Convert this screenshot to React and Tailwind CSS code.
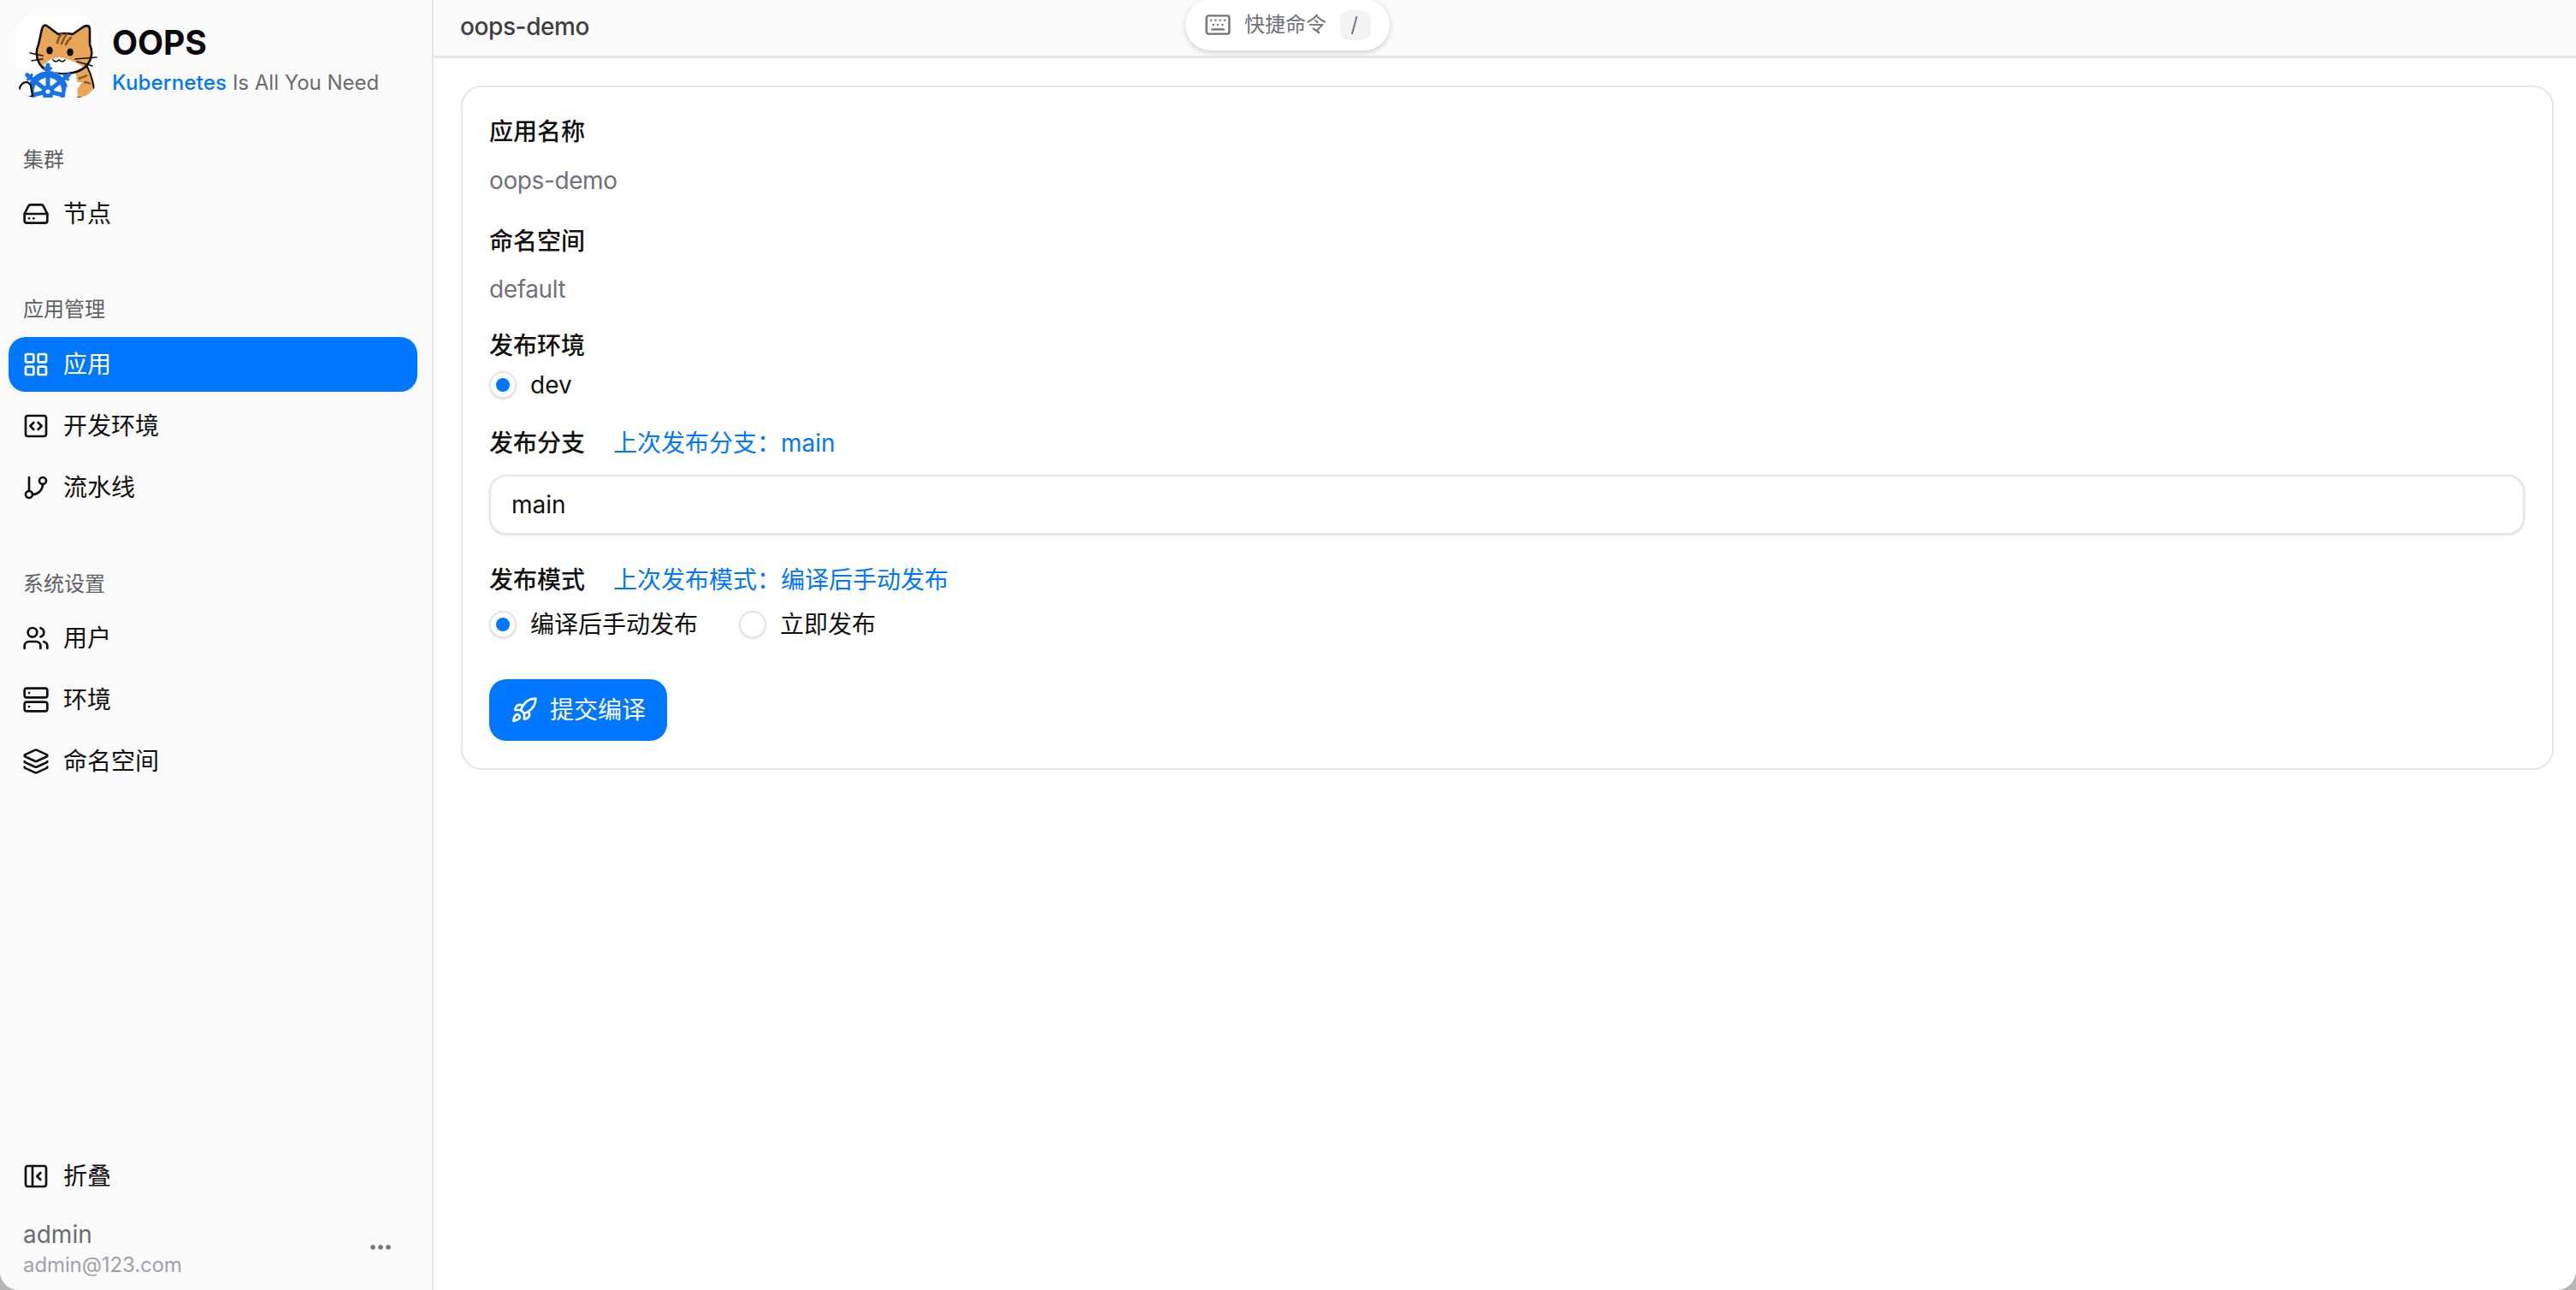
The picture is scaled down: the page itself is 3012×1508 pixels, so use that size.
import React from "react";
import { HardDrive, LayoutGrid, SquareCode, GitBranch, Users, Server, Layers, PanelLeftClose, Rocket, Keyboard } from "lucide-react";

const SANS = "font-['Inter','Noto_Sans_CJK_SC',sans-serif]";

function CatLogo() {
  const spokes = [0, 51.4, 102.8, 154.2, 205.6, 257, 308.4];
  return (
    <svg width="96" height="96" viewBox="0 0 96 96" className="block">
      <defs>
        <clipPath id="logoClip"><rect width="96" height="96" rx="24" /></clipPath>
      </defs>
      <g clipPath="url(#logoClip)">
        <rect width="96" height="96" fill="#ffffff" />
        <path d="M56 62 L84 60 Q92 76 93 96 L52 96 Z" fill="#E9A558" stroke="#111" strokeWidth="2" />
        <path d="M36 62 L70 62 L72 78 L78 78 L66 96 L30 96 Z" fill="#fff" />
        <path d="M74 74 Q80 72 84 70 M80 78 Q84 78 88 80" stroke="#8a5a2b" strokeWidth="2.5" fill="none" />
        <path d="M27 34 L31 16 Q33 9 38 13 L50 22 Q58 20 67 22 L80 13 Q87 10 87 17 L87 34 Q92 45 86 55 Q78 68 56 68 Q34 68 28 56 Q22 45 27 34 Z" fill="#E9A558" stroke="#111" strokeWidth="2.6" strokeLinejoin="round" />
        <path d="M33 58 Q40 50 51 49 Q63 50 79 60 Q70 67 55 67 Q40 67 33 58 Z" fill="#ffffff" />
        <path d="M49 32 Q50 26 54 22 M54 33 Q56 27 60 22 M59 34 Q61 29 65 26" stroke="#8a5a2b" strokeWidth="2.8" fill="none" strokeLinecap="round" />
        <ellipse cx="40" cy="41" rx="3.8" ry="4.6" fill="#111" />
        <ellipse cx="64" cy="43" rx="3.8" ry="4.6" fill="#111" />
        <path d="M48 45.5 Q51 44.5 54 45.5 L51 49 Z" fill="#F0A078" />
        <path d="M44 52 Q47 56 51 52 Q55 56 58 52" stroke="#111" strokeWidth="1.6" fill="none" strokeLinecap="round" />
        <path d="M17 44 L32 47 M19 53 L32 51 M70 51 L95 49 M72 54 L90 59" stroke="#111" strokeWidth="1.5" fill="none" strokeLinecap="round" />
        <g transform="translate(38 89)">
          <circle r="24" fill="#fff" />
          {spokes.map((a) => (
            <g key={a} transform={`rotate(${a})`}>
              <path d="M0 0 V-31" stroke="#1673E6" strokeWidth="5" strokeLinecap="round" />
              <path d="M-3.5 -27 H3.5" stroke="#1673E6" strokeWidth="3.4" strokeLinecap="round" />
            </g>
          ))}
          <circle r="20" fill="none" stroke="#1673E6" strokeWidth="7.5" />
          <circle r="7.5" fill="#1673E6" />
          <circle r="2.6" fill="#fff" />
        </g>
        <path d="M9 79 Q15 76 18 82 L20 94 Q14 98 8 94 Q1 86 9 79 Z" fill="#fff" stroke="#111" strokeWidth="2.2" />
        <path d="M60 84 L68 81 Q74 84 72 96 L58 96 Z" fill="#fff" stroke="#e5e5e5" strokeWidth="1.2" />
      </g>
    </svg>
  );
}

function NavItem({ icon: Icon, label, active }) {
  return (
    <div className={`flex items-center gap-[16px] h-16 pl-4 rounded-[20px] text-[28px] ${active ? "bg-[#0077ff] text-white" : "text-[#111111]"}`}>
      <Icon size={32} strokeWidth={2} className="shrink-0" />
      <span>{label}</span>
    </div>
  );
}

function SectionLabel({ children }) {
  return <div className="h-8 pl-[17px] flex items-center text-[24px] leading-8 text-[#5f5f66]">{children}</div>;
}

function Radio({ checked, label }) {
  return (
    <div className="flex items-center gap-[16px]">
      <span className="w-[32px] h-[32px] rounded-full border-2 border-[#e4e4e7] bg-white flex items-center justify-center shadow-sm">
        {checked && <span className="w-[16px] h-[16px] rounded-full bg-[#0077ff]" />}
      </span>
      <span className="text-[28px] leading-8 text-[#111111]">{label}</span>
    </div>
  );
}

function FieldLabel({ className, children }) {
  return <div className={`h-10 flex items-center text-[28px] font-medium text-[#111111] ${className}`}>{children}</div>;
}

export default function App() {
  return (
    <div className={`w-[3012px] h-[1508px] bg-[#b5b5b5] overflow-hidden ${SANS}`}>
      <div className="relative w-full h-full flex bg-white rounded-b-[22px] overflow-hidden">
        <aside className="w-[507px] shrink-0 h-full bg-[#fafafa] border-r-2 border-[#e6e6e6] flex flex-col pl-[10px] pr-[17px]">
          <div className="flex items-start gap-[17px] pl-[8px] pt-[18px]">
            <CatLogo />
            <div className="flex flex-col">
              <div className="mt-[11px] text-[39px] leading-[42px] font-bold text-[#0a0a0a]">OOPS</div>
              <div className="mt-[8px] text-[24px] leading-[35px] text-[#6b6b70] whitespace-nowrap">
                <span className="text-[#0077ff] font-medium tracking-[0.2px]">Kubernetes</span> Is All You Need
              </div>
            </div>
          </div>

          <div className="mt-[57px]"><SectionLabel>集群</SectionLabel></div>
          <div className="mt-[15px]"><NavItem icon={HardDrive} label="节点" /></div>

          <div className="mt-[64px]"><SectionLabel>应用管理</SectionLabel></div>
          <div className="mt-4 flex flex-col gap-2">
            <NavItem icon={LayoutGrid} label="应用" active />
            <NavItem icon={SquareCode} label="开发环境" />
            <NavItem icon={GitBranch} label="流水线" />
          </div>

          <div className="mt-[65px]"><SectionLabel>系统设置</SectionLabel></div>
          <div className="mt-[15px] flex flex-col gap-2">
            <NavItem icon={Users} label="用户" />
            <NavItem icon={Server} label="环境" />
            <NavItem icon={Layers} label="命名空间" />
          </div>

          <div className="mt-auto"><NavItem icon={PanelLeftClose} label="折叠" /></div>
          <div className="mt-[16px] pb-[13px] pl-[17px] flex items-center justify-between pr-[31px]">
            <div className="flex flex-col">
              <div className="text-[28px] leading-[40px] text-[#6b6b70]">admin</div>
              <div className="text-[24px] leading-[32px] text-[#a1a1aa] tracking-[-0.1px]">admin@123.com</div>
            </div>
            <svg width="24" height="6" viewBox="0 0 24 6" className="mt-[-2px]">
              <circle cx="3" cy="3" r="2.8" fill="#77777c" />
              <circle cx="12" cy="3" r="2.8" fill="#77777c" />
              <circle cx="21" cy="3" r="2.8" fill="#77777c" />
            </svg>
          </div>
        </aside>

        <main className="flex-1 min-w-0 flex flex-col">
          <header className="h-[68px] shrink-0 bg-[#fafafa] border-b-[3px] border-[#e6e6e6] pl-[31px] pb-[3px] flex items-center">
            <span className="text-[28px] text-[#3f3f46] font-medium tracking-[-0.4px]">oops-demo</span>
          </header>
          <div className="pt-[32px] pl-[32px] pr-[26px]">
            <div className="border-2 border-[#e6e6e6] rounded-[24px] pt-[32px] pb-[32px] pl-[31px] pr-[32px]">
              <FieldLabel>应用名称</FieldLabel>
              <div className="mt-[17px] h-10 flex items-center text-[28px] text-[#71717a] tracking-[-0.4px]">oops-demo</div>
              <FieldLabel className="mt-[31px]">命名空间</FieldLabel>
              <div className="mt-4 h-10 flex items-center text-[28px] text-[#71717a] tracking-[-0.4px]">default</div>
              <FieldLabel className="mt-[26px]">发布环境</FieldLabel>
              <div className="mt-[10px]"><Radio checked label="dev" /></div>
              <FieldLabel className="mt-[32px] gap-[33px]">
                <span>发布分支</span>
                <span className="text-[#0077ff] font-normal">上次发布分支：main</span>
              </FieldLabel>
              <div className="mt-[17px] h-[70px] border-2 border-[#e4e4e7] rounded-[20px] shadow-sm px-[24px] flex items-center text-[28px] text-[#111111]">main</div>
              <FieldLabel className="mt-[33px] gap-[33px]">
                <span>发布模式</span>
                <span className="text-[#0077ff] font-normal">上次发布模式：编译后手动发布</span>
              </FieldLabel>
              <div className="mt-4 flex items-center gap-[48px]">
                <Radio checked label="编译后手动发布" />
                <Radio label="立即发布" />
              </div>
              <button className="mt-[48px] h-[72px] w-[208px] rounded-[20px] bg-[#0077ff] text-white text-[28px] flex items-center justify-center gap-[14px]">
                <Rocket size={32} strokeWidth={2} />
                <span>提交编译</span>
              </button>
            </div>
          </div>
        </main>

        <div className="absolute left-[1386px] top-[-1px] w-[239px] h-[60px] rounded-full bg-white shadow-[0_2px_6px_rgba(0,0,0,0.18)] flex items-center pl-[22px]">
          <Keyboard size={32} strokeWidth={1.8} className="text-[#71717a]" />
          <span className="ml-[15px] text-[24px] text-[#71717a]">快捷命令</span>
          <span className="ml-[16px] w-[36px] h-[35px] rounded-[10px] bg-[#f4f4f5] flex items-center justify-center text-[24px] text-[#71717a] pr-[3px]">/</span>
        </div>
      </div>
    </div>
  );
}
